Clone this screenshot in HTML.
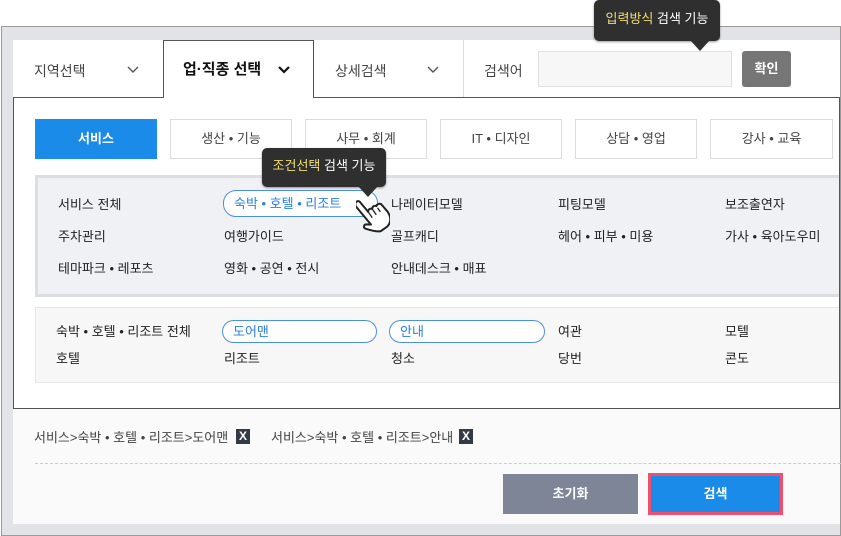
<!DOCTYPE html>
<html><head><meta charset="utf-8"><style>
*{margin:0;padding:0;box-sizing:border-box}
body{width:841px;height:536px;background:#fff;position:relative;overflow:hidden;font-family:"Liberation Sans","Noto Sans CJK KR",sans-serif;font-size:13px;color:#222}
.a{position:absolute}
.t{position:absolute;white-space:nowrap;line-height:16px}
.cb{position:absolute;top:119px;height:40px;border:1px solid #dcdcdc;background:#fff;text-align:center;line-height:38px;color:#444;font-size:13px}
.pill{position:absolute;border:1px solid #4a8fe0;border-radius:13px;color:#2a7fe0;padding-left:10px;background:#fff}
.tip{position:absolute;background:#2f2f2f;border-radius:5px;color:#fff;font-size:13px;text-align:center;box-shadow:0 1px 2px rgba(0,0,0,.4)}
.tip b{color:#f2df74;font-weight:normal}
</style></head><body>
<div class="a" style="left:1px;top:26px;width:840px;height:510px;border:1px solid #9a9a9a;background:#e2e3e6"></div>
<div class="a" style="left:13px;top:40px;width:827px;height:484px;background:#fafafa"></div>
<div class="a" style="left:13px;top:40px;width:827px;height:57px;background:#fff"></div>
<div class="t" style="left:34px;top:63px;font-size:14px;color:#444">지역선택</div>
<svg class="a" style="left:127px;top:66px" width="12" height="8"><path d="M1 1l5 5 5-5" fill="none" stroke="#555" stroke-width="1.4"/></svg>
<div class="a" style="left:163px;top:40px;width:151px;height:58px;border:1px solid #555;border-bottom:none;background:#fff"></div>
<div class="t" style="left:183px;top:62px;font-size:15px;font-weight:bold;color:#111">업·직종 선택</div>
<svg class="a" style="left:278px;top:66px" width="12" height="8"><path d="M1 1l5 5 5-5" fill="none" stroke="#111" stroke-width="2.2"/></svg>
<div class="t" style="left:335px;top:63px;font-size:14px;color:#444">상세검색</div>
<svg class="a" style="left:427px;top:66px" width="12" height="8"><path d="M1 1l5 5 5-5" fill="none" stroke="#555" stroke-width="1.4"/></svg>
<div class="a" style="left:463px;top:40px;width:1px;height:57px;background:#ddd"></div>
<div class="t" style="left:484px;top:63px;font-size:14px;color:#444">검색어</div>
<div class="a" style="left:538px;top:51px;width:194px;height:36px;background:#f7f7f7;border:1px solid #e0e0e0"></div>
<div class="a" style="left:742px;top:51px;width:49px;height:36px;background:#767676;border-radius:3px;color:#fff;font-weight:bold;text-align:center;line-height:36px">확인</div>
<div class="a" style="left:13px;top:97px;width:827px;height:312px;border:1px solid #555;background:#fff"></div>
<div class="a" style="left:164px;top:96px;width:149px;height:3px;background:#fff"></div>
<div class="cb" style="left:35px;width:122px;background:#1a8be8;border-color:#1a8be8;color:#fff;font-weight:bold">서비스</div>
<div class="cb" style="left:170px;width:122px">생산 • 기능</div>
<div class="cb" style="left:305px;width:122px">사무 • 회계</div>
<div class="cb" style="left:440px;width:122px">IT • 디자인</div>
<div class="cb" style="left:575px;width:122px">상담 • 영업</div>
<div class="cb" style="left:710px;width:123px">강사 • 교육</div>
<div class="a" style="left:35px;top:175px;width:804px;height:122px;background:#eff1f5;border:3px solid #dcdee2;border-right:none"></div>
<div class="t" style="left:58px;top:197px">서비스 전체</div>
<div class="pill" style="left:223px;top:190px;width:155px;height:27px;line-height:25px">숙박 • 호텔 • 리조트</div>
<div class="t" style="left:391px;top:197px">나레이터모델</div>
<div class="t" style="left:558px;top:197px">피팅모델</div>
<div class="t" style="left:725px;top:197px">보조출연자</div>
<div class="t" style="left:58px;top:229px">주차관리</div>
<div class="t" style="left:224px;top:229px">여행가이드</div>
<div class="t" style="left:391px;top:229px">골프캐디</div>
<div class="t" style="left:558px;top:229px">헤어 • 피부 • 미용</div>
<div class="t" style="left:725px;top:229px">가사 • 육아도우미</div>
<div class="t" style="left:58px;top:261px">테마파크 • 레포츠</div>
<div class="t" style="left:224px;top:261px">영화 • 공연 • 전시</div>
<div class="t" style="left:391px;top:261px">안내데스크 • 매표</div>
<div class="a" style="left:35px;top:307px;width:804px;height:76px;background:#f7f7f8;border:1px solid #e6e6e6;border-right:none"></div>
<div class="t" style="left:56px;top:324px">숙박 • 호텔 • 리조트 전체</div>
<div class="pill" style="left:222px;top:320px;width:155px;height:23px;line-height:21px">도어맨</div>
<div class="pill" style="left:389px;top:320px;width:156px;height:23px;line-height:21px">안내</div>
<div class="t" style="left:558px;top:324px">여관</div>
<div class="t" style="left:725px;top:324px">모텔</div>
<div class="t" style="left:56px;top:351px">호텔</div>
<div class="t" style="left:224px;top:351px">리조트</div>
<div class="t" style="left:391px;top:351px">청소</div>
<div class="t" style="left:558px;top:351px">당번</div>
<div class="t" style="left:725px;top:351px">콘도</div>
<svg class="a" style="left:356px;top:192px" width="34" height="50" viewBox="0 0 34 50">
<g transform="rotate(-35 17 25)">
<path d="M10 4c2-2 5-1 5 2l1 12c1-2 4-2 5 0c1-2 4-2 5 0c1-1 4-1 5 1l1 10c0 6-3 11-9 12l-8 0c-4-2-8-7-11-11c-1-2 1-4 3-3l4 3l-2-24z" fill="#fff" stroke="#222" stroke-width="2" stroke-linejoin="round"/>
<path d="M16 18v7M21 19v6M26 20v5" stroke="#222" stroke-width="1.3"/>
</g></svg>
<div class="t" style="left:34px;top:430px;color:#444">서비스&gt;숙박 • 호텔 • 리조트&gt;도어맨</div>
<div class="a" style="left:236px;top:429px;width:14px;height:15px;background:#333a46;color:#fff;font-size:12px;text-align:center;line-height:15px;font-weight:bold">X</div>
<div class="t" style="left:271px;top:430px;color:#444">서비스&gt;숙박 • 호텔 • 리조트&gt;안내</div>
<div class="a" style="left:459px;top:429px;width:14px;height:15px;background:#333a46;color:#fff;font-size:12px;text-align:center;line-height:15px;font-weight:bold">X</div>
<div class="a" style="left:35px;top:463px;width:806px;border-top:1px dashed #ccc"></div>
<div class="a" style="left:503px;top:474px;width:135px;height:40px;background:#7e8597;color:#fff;font-weight:bold;text-align:center;line-height:40px">초기화</div>
<div class="a" style="left:648px;top:473px;width:135px;height:42px;background:#1a8be8;border:3px solid #f0506e;color:#fff;font-weight:bold;text-align:center;line-height:36px">검색</div>
<div class="tip" style="left:594px;top:0;width:126px;height:41px;line-height:38px"><b>입력방식</b> 검색 기능</div>
<svg class="a" style="left:690px;top:40px" width="20" height="12"><path d="M0 0l10 11 10-11z" fill="#2f2f2f"/></svg>
<div class="tip" style="left:262px;top:148px;width:124px;height:39px;line-height:36px"><b>조건선택</b> 검색 기능</div>
<svg class="a" style="left:358px;top:186px" width="20" height="12"><path d="M0 0l10 11 10-11z" fill="#2f2f2f"/></svg>
</body></html>
